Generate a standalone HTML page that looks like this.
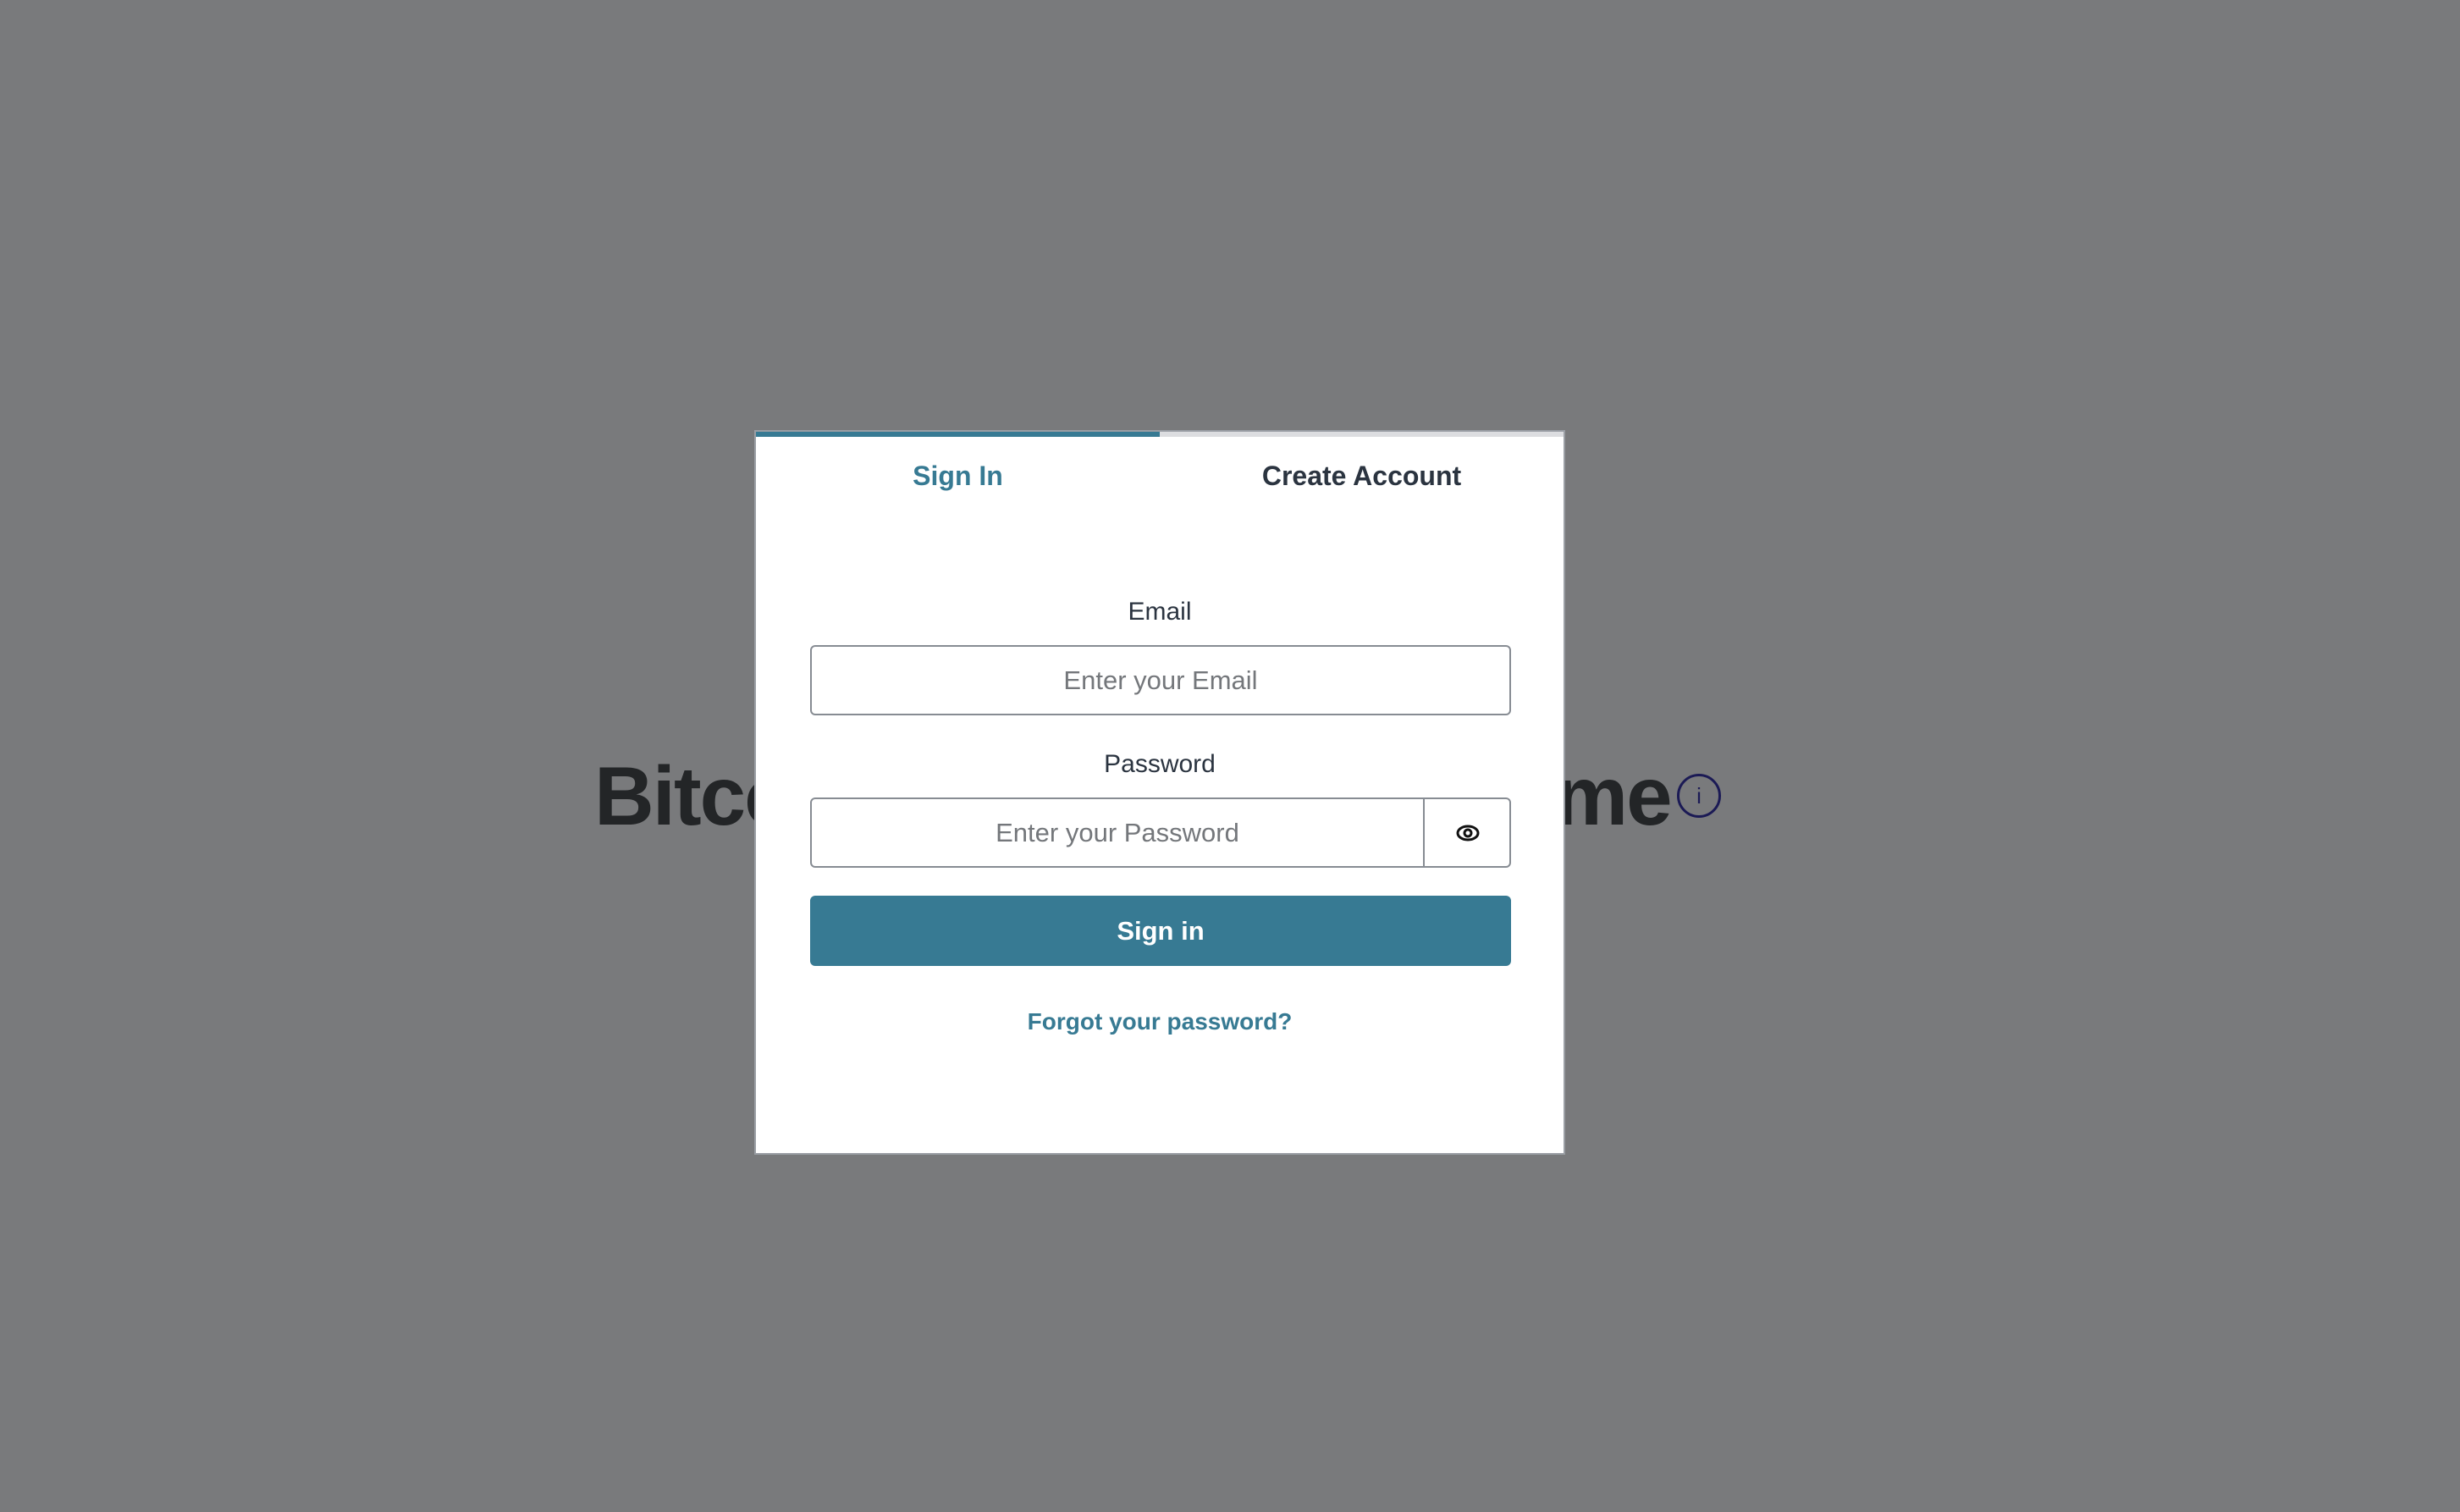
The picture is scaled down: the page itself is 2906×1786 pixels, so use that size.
<!DOCTYPE html>
<html><head><style>
*{box-sizing:border-box;margin:0;padding:0}
body{width:2906px;height:1786px;background:#797a7c;font-family:"Liberation Sans",sans-serif;position:relative;overflow:hidden}
.h{position:absolute;top:880px;font-size:98px;font-weight:bold;color:#232527;line-height:120px;letter-spacing:-2px}
.info{position:absolute;left:1981px;top:914px;width:52px;height:52px;border:3px solid #1b1a55;border-radius:50%;color:#1b1a55;font-size:26px;text-align:center;line-height:46px}
.modal{position:absolute;left:891px;top:508px;width:958px;height:856px;background:#fff;border:2px solid #9a9ea4}
.tabs{position:absolute;left:0;top:0;width:100%;height:6px;background:#dcdde0}
.tabs div{width:50%;height:100%;background:#377a93}
.tab{position:absolute;top:34px;font-size:32px;font-weight:bold;width:50%;text-align:center}
.lbl{position:absolute;left:0;width:100%;text-align:center;font-size:30px;color:#2b3440}
.inp{position:absolute;left:64px;width:828px;height:83px;border:2px solid #878c93;border-radius:6px;color:#74777b;font-size:31px;line-height:79px;text-align:center}
.btn{position:absolute;left:64px;top:548px;width:828px;height:83px;background:#377a93;border-radius:6px;color:#fff;font-weight:bold;font-size:31px;line-height:83px;text-align:center}
.fg{position:absolute;top:681px;width:100%;text-align:center;color:#377a93;font-weight:bold;font-size:28px}
</style></head><body>
<div class="h" style="left:702px">Bitcoin</div>
<div class="h" style="left:1836px">me</div>
<div class="info">i</div>
<div class="modal">
<div class="tabs"><div></div></div>
<div class="tab" style="left:0;color:#377a93">Sign In</div>
<div class="tab" style="left:50%;color:#2b3440">Create Account</div>
<div class="lbl" style="top:196px">Email</div>
<div class="inp" style="top:252px">Enter your Email</div>
<div class="lbl" style="top:376px">Password</div>
<div class="inp" style="top:432px;text-align:left"><span style="display:inline-block;width:724px;text-align:center;border-right:2px solid #878c93;height:79px">Enter your Password</span><svg style="position:absolute;left:760px;top:26px" width="30" height="28" viewBox="0 0 30 28"><ellipse cx="15" cy="14" rx="12" ry="8" fill="none" stroke="#111" stroke-width="3"/><circle cx="15" cy="14" r="4" fill="none" stroke="#111" stroke-width="3"/></svg></div>
<div class="btn">Sign in</div>
<div class="fg">Forgot your password?</div>
</div>
</body></html>
